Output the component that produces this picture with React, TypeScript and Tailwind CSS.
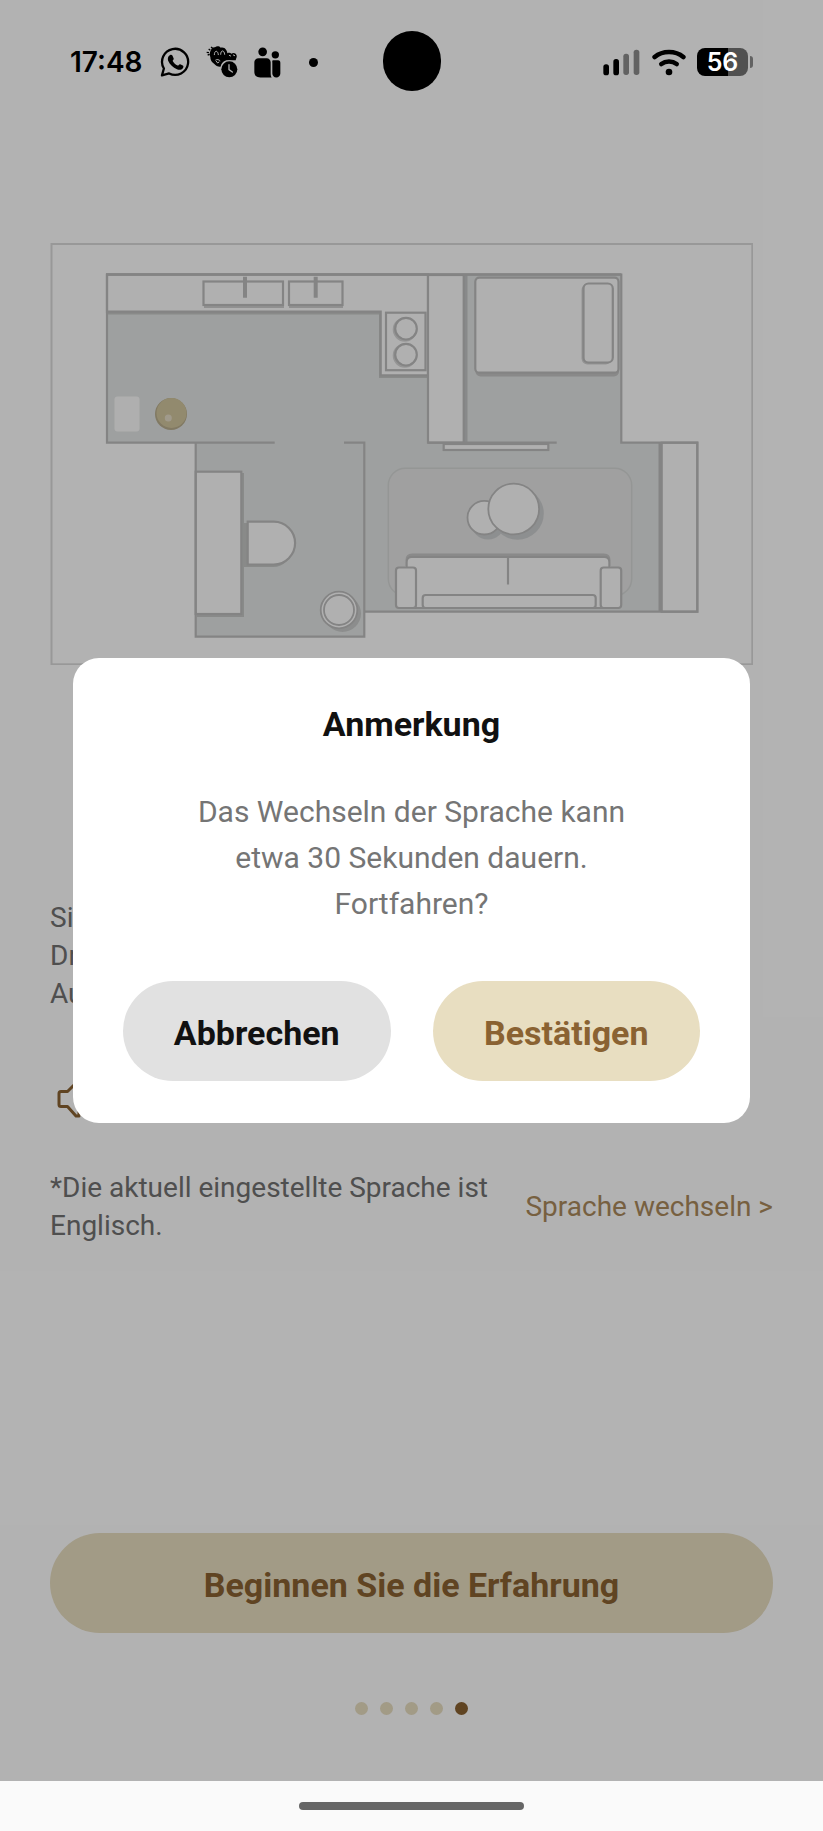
import { useState } from 'react';

const TOTAL_STEPS = 5;

function WhatsAppIcon() {
  return (
    <svg viewBox="0 0 90 92" className="h-[30px] w-[30px]" fill="none">
      <path
        d="M5 87l6-21A40 40 0 1 1 27 81z"
        stroke="#000"
        strokeWidth="7"
        strokeLinejoin="round"
      />
      <path
        d="M29 25c3-2 6-2 8 1l4 9c1 3-4 6-3 8 4 7 8 11 15 14 3 1 5-6 8-4l8 4c3 2 2 5 0 8-4 5-11 6-18 3C39 63 29 54 24 42c-2-7-1-13 5-17z"
        fill="#000"
      />
    </svg>
  );
}

function CrocodileIcon() {
  return (
    <svg viewBox="0 0 94 96" className="h-8 w-8">
      <path
        d="M14 12c2-6 7-9 12-8 6-5 13-3 17 1 7-2 13 1 16 6 3 4 4 8 4 11 5-2 9-2 12 1 4-3 9-3 13 0 4 4 4 9 2 13l-2 7H64c-10 0-19 8-21 19-7 1-15-3-19-8-8-5-12-12-12-21-3-7-2-15 2-21z"
        fill="#000"
      />
      <path d="M4 27l6-2M1 19l7 1M7 9l5 4M14 3l5 4" stroke="#000" strokeWidth="4" />
      <path
        d="M24 26c0-14 11-14 12 0M43 25c0-14 11-14 12 0"
        stroke="#b2b2b2"
        strokeWidth="3"
        fill="none"
        strokeLinecap="round"
      />
      <path
        d="M69 28l4 2M81 27l4 2M28 42c4-3 10-1 13 2M30 46l4 5 4-3"
        stroke="#b2b2b2"
        strokeWidth="3"
        fill="none"
        strokeLinecap="round"
      />
      <circle cx="69" cy="70" r="27" fill="#b2b2b2" />
      <circle cx="69" cy="70" r="24" fill="#000" />
      <path d="M68 56v15l10 7" stroke="#b2b2b2" strokeWidth="4" fill="none" strokeLinecap="round" />
    </svg>
  );
}

function PeopleIcon() {
  return (
    <svg viewBox="0 0 81 92" className="h-[31px] w-[27px]">
      <circle cx="26" cy="14" r="13" />
      <circle cx="64" cy="23" r="11" />
      <path d="M14 33h24c7 0 12 5 12 12v30c0 7 0 12 3 16H19C7 91 1 85 1 74V46c0-8 5-13 13-13z" />
      <path d="M56 39h16c5 0 7 3 7 8v32c0 7-5 12-12 12s-12-5-12-12V47c0-4-1-5 1-8z" />
    </svg>
  );
}

function SignalIcon() {
  return (
    <svg viewBox="0 0 111 81" className="h-[27px] w-[37px]">
      <rect x="1" y="46" width="17" height="33" rx="8" />
      <rect x="31" y="30" width="17" height="49" rx="8" />
      <rect x="61" y="14" width="17" height="64" rx="8" fill="#626262" />
      <rect x="92" y="2" width="17" height="76" rx="8" fill="#626262" />
    </svg>
  );
}

function WifiIcon() {
  return (
    <svg viewBox="0 0 102 81" className="h-[27px] w-[34px]" fill="none">
      <path d="M8 24C32 4 70 4 94 24" stroke="#000" strokeWidth="14" strokeLinecap="round" />
      <path d="M28 45c13-10 33-10 46 0" stroke="#000" strokeWidth="14" strokeLinecap="round" />
      <circle cx="51" cy="69" r="10" fill="#000" />
    </svg>
  );
}

function StatusBar() {
  return (
    <div className="relative z-20 flex h-[124px] items-center justify-between px-[70px] text-black">
      <div className="flex items-center">
        <span className="w-[90px] font-['Inter'] text-[28px] font-semibold leading-8">17:48</span>
        <div className="flex items-center gap-4">
          <WhatsAppIcon />
          <CrocodileIcon />
          <PeopleIcon />
          <span className="ml-3 h-[9px] w-[9px] rounded-full bg-black" />
        </div>
      </div>
      <span className="absolute left-1/2 top-[31px] h-[60px] w-[58px] -translate-x-1/2 rounded-[29px] bg-black" />
      <div className="flex items-center">
        <SignalIcon />
        <span className="ml-3">
          <WifiIcon />
        </span>
        <span className="ml-[11px] flex h-7 w-[51px] items-center justify-center rounded-lg bg-linear-to-r from-black from-60% to-[#505050] to-60% font-['Inter'] text-[25px] font-semibold leading-7 text-white">
          56
        </span>
        <span className="ml-0.5 h-3 w-[3px] rounded-r-sm bg-[#626262]" />
      </div>
    </div>
  );
}

function FloorPlan() {
  return (
    <svg
      viewBox="50 243 703 422"
      className="block h-auto w-full"
      fill="#fdfdfd"
      stroke="#bdbdbd"
      strokeWidth="2.2"
      role="img"
      aria-label="Grundriss"
    >
      <rect x="51.5" y="244" width="700.8" height="420.3" stroke="#dadada" strokeWidth="2" fill="#fff" />

      {/* floor */}
      <path
        d="M107 274.5H621.3V442.7H697.3V611.7H364.3V636.7H195.7V442.7H107z"
        fill="#e3e6e5"
        stroke="none"
      />

      {/* kitchen counter */}
      <path d="M107 311.7H380.7V375.3H428V378H379V314.5H107z" fill="#c4c6c5" stroke="none" />
      <path d="M107 274.5H428V375.3H380.7V311.7H107z" />
      <path d="M204 307h80M289 307h54" stroke="#cfcfcf" />
      <rect x="203.5" y="281.5" width="79.5" height="23.5" />
      <rect x="289" y="281.5" width="53.5" height="23.5" />
      <path d="M245 276.7v21M315.7 276.7v21" strokeWidth="4" />
      <rect x="386" y="312.7" width="39.5" height="57.5" />
      <circle cx="404.8" cy="329.6" r="11" stroke="#d6d6d6" />
      <circle cx="404.8" cy="355.6" r="11" stroke="#d6d6d6" />
      <circle cx="406" cy="328.7" r="10.8" />
      <circle cx="406" cy="354.7" r="10.8" />

      {/* robot and station */}
      <rect x="114.5" y="396.5" width="25" height="35" rx="3" fill="#fbfbfb" stroke="none" />
      <circle cx="171" cy="414" r="16" fill="#b9ae8e" stroke="none" />
      <circle cx="171.5" cy="413" r="15" fill="#d2c69e" stroke="none" />
      <circle cx="168.3" cy="418" r="3.5" fill="#e6ddc8" stroke="none" />

      {/* bedroom */}
      <path d="M465.5 275v168" stroke="#c3c5c6" strokeWidth="4" />
      <rect x="428" y="275" width="35.7" height="167.7" />
      <rect x="475.5" y="281" width="143.5" height="95.5" rx="5" fill="#c4c4c4" stroke="none" />
      <rect x="475.3" y="277.7" width="143.2" height="95" rx="4" />
      <rect x="581.5" y="284" width="30" height="80.5" rx="6" fill="#d3d3d3" stroke="none" />
      <rect x="583.5" y="283.5" width="29.3" height="79" rx="5" />

      {/* right cabinet */}
      <rect x="661.7" y="442.7" width="35.6" height="169" />
      <path d="M660 443v168.5" strokeWidth="3" />

      {/* office */}
      <rect x="197" y="473" width="47" height="144" fill="#c4c6c5" stroke="none" />
      <rect x="195.7" y="471.7" width="45.6" height="142.3" />
      <path d="M243 523h30a22 22 0 0 1 14 38q-6 6-14 6h-30z" fill="#c4c6c5" stroke="none" />
      <path d="M247.7 521.7h26a21.4 21.4 0 0 1 0 42.8h-26z" />
      <circle cx="342.5" cy="613.5" r="18.5" fill="#c9cbca" stroke="none" />
      <circle cx="339" cy="610" r="18.3" strokeWidth="1.8" />
      <circle cx="339" cy="610" r="15" strokeWidth="1.8" />

      {/* living room */}
      <rect x="388.3" y="468.3" width="243.4" height="127.4" rx="17" fill="#e5e5e5" stroke="#d5d7d6" strokeWidth="1.5" />
      <rect x="443.7" y="444" width="104.6" height="6" />
      <circle cx="488" cy="522.5" r="17" fill="#cbcdce" stroke="none" />
      <circle cx="517.5" cy="513.5" r="26.3" fill="#cbcdce" stroke="none" />
      <circle cx="484.3" cy="517.7" r="16.8" strokeWidth="1.8" />
      <circle cx="513.7" cy="509" r="25.4" strokeWidth="1.8" />
      <path d="M407 566v-6q0-5 5-5h192q5 0 5 5v6" fill="none" stroke="#c6c6c6" strokeWidth="3" />
      <path d="M406.8 608v-46q0-5 5-5h192.4q5 0 5 5v46z" strokeWidth="1.8" />
      <path d="M508 557v27.5" />
      <rect x="422.7" y="595" width="173" height="13" rx="3" />
      <rect x="396" y="567.5" width="20" height="40.5" rx="3" />
      <rect x="600.7" y="567.5" width="20.5" height="40.5" rx="3" />

      {/* walls */}
      <path
        d="M274.7 442.7H107V274.5H621.3V442.7H697.3V611.7H364.3M344 442.7H364.3V636.7H195.7V442.7M428 442.7H556.7"
        fill="none"
      />
      <path d="M106 274.5H621.3" strokeWidth="2.6" />
    </svg>
  );
}

function SpeakerIcon() {
  return (
    <svg
      viewBox="0 0 48 48"
      className="h-12 w-12"
      fill="none"
      stroke="#8a6232"
      strokeWidth="3"
      strokeLinecap="round"
      strokeLinejoin="round"
    >
      <path d="M11 16.5h6.5L26 8h3v33h-3l-8.5-9.5H11q-2 0-2-2v-11q0-2 2-2z" />
      <path d="M35 18q4 6 0 12" />
    </svg>
  );
}

function LanguageDialog({ onClose }: { onClose: () => void }) {
  return (
    <div className="absolute inset-0 z-10 flex items-center justify-center bg-black/30 px-[73px]">
      <div
        role="dialog"
        aria-modal="true"
        aria-labelledby="dialog-title"
        className="w-full rounded-[26px] bg-white px-[50px] pb-[42px] pt-[46px] text-center"
      >
        <h2 id="dialog-title" className="text-[34px] font-bold leading-10 text-[#111111]">
          Anmerkung
        </h2>
        <p className="mt-[45px] px-14 text-[30px] leading-[46px] text-[#757575]">
          Das Wechseln der Sprache kann etwa 30 Sekunden dauern. Fortfahren?
        </p>
        <div className="mt-[54px] grid grid-cols-2 gap-[42px]">
          <button
            onClick={onClose}
            className="h-[100px] rounded-full bg-[#e1e1e1] pt-1 text-[34px] font-bold text-[#111111]"
          >
            Abbrechen
          </button>
          <button
            onClick={onClose}
            className="h-[100px] rounded-full bg-[#e8dec1] pt-1 text-[34px] font-bold text-[#8a6232]"
          >
            Bestätigen
          </button>
        </div>
      </div>
    </div>
  );
}

export default function App() {
  const [dialogOpen, setDialogOpen] = useState(true);

  return (
    <div className="flex min-h-screen flex-col bg-white font-['Roboto',sans-serif]">
      <main className="relative flex flex-1 flex-col">
        <StatusBar />

        <div className="flex flex-1 flex-col px-[50px] pb-[66px] pt-[119px]">
          <div className="pr-5">
            <FloorPlan />
          </div>

          <p className="mt-[234px] text-[28px] leading-[38px] text-[#717171]">
            Sie
            <br />
            Drücken
            <br />
            Auf
          </p>

          <div className="mt-[62px]">
            <SpeakerIcon />
          </div>

          <div className="mt-[46px] flex items-center justify-between gap-8">
            <p className="text-[28px] leading-[38px] text-[#717171]">
              *Die aktuell eingestellte Sprache ist Englisch.
            </p>
            <a
              href="#sprache"
              onClick={() => setDialogOpen(true)}
              className="shrink-0 text-[28px] leading-[38px] text-[#ab8a5c]"
            >
              Sprache wechseln &gt;
            </a>
          </div>

          <button className="mt-auto h-[100px] w-full rounded-full bg-[#e8dec1] pt-1 text-[34px] font-bold text-[#8a6232]">
            Beginnen Sie die Erfahrung
          </button>

          <div className="mt-[69px] flex justify-center gap-3">
            {Array.from({ length: TOTAL_STEPS }, (_, i) => (
              <span
                key={i}
                className={
                  i === TOTAL_STEPS - 1
                    ? 'h-[13px] w-[13px] rounded-full bg-[#8a6232]'
                    : 'h-[13px] w-[13px] rounded-full bg-[#e8dec1]'
                }
              />
            ))}
          </div>
        </div>

        {dialogOpen && <LanguageDialog onClose={() => setDialogOpen(false)} />}
      </main>

      <footer className="flex h-[50px] items-center justify-center bg-[#fafafa]">
        <span className="h-2 w-[225px] rounded-full bg-[#666666]" />
      </footer>
    </div>
  );
}
